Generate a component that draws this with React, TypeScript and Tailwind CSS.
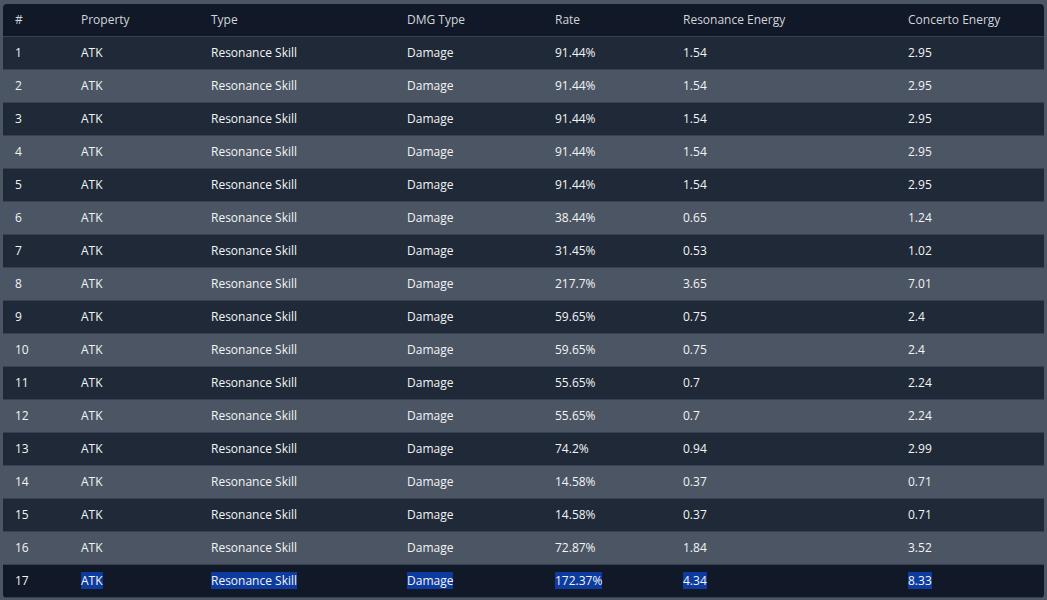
import * as React from "react";

type Row = {
  rate: string;
  res: string;
  con: string;
};

const rows: Row[] = [
  { rate: "91.44%", res: "1.54", con: "2.95" },
  { rate: "91.44%", res: "1.54", con: "2.95" },
  { rate: "91.44%", res: "1.54", con: "2.95" },
  { rate: "91.44%", res: "1.54", con: "2.95" },
  { rate: "91.44%", res: "1.54", con: "2.95" },
  { rate: "38.44%", res: "0.65", con: "1.24" },
  { rate: "31.45%", res: "0.53", con: "1.02" },
  { rate: "217.7%", res: "3.65", con: "7.01" },
  { rate: "59.65%", res: "0.75", con: "2.4" },
  { rate: "59.65%", res: "0.75", con: "2.4" },
  { rate: "55.65%", res: "0.7", con: "2.24" },
  { rate: "55.65%", res: "0.7", con: "2.24" },
  { rate: "74.2%", res: "0.94", con: "2.99" },
  { rate: "14.58%", res: "0.37", con: "0.71" },
  { rate: "14.58%", res: "0.37", con: "0.71" },
  { rate: "72.87%", res: "1.84", con: "3.52" },
  { rate: "172.37%", res: "4.34", con: "8.33" },
];

const cols = "grid grid-cols-[66px_130px_196px_148px_128px_225px_1fr]";

function Sel({ on, children }: { on: boolean; children: React.ReactNode }) {
  if (!on) return <span>{children}</span>;
  return <span className="bg-[#0d3b9e]">{children}</span>;
}

export default function App() {
  return (
    <div
      className="h-[600px] w-[1047px] overflow-hidden bg-[#4b5563] pt-[4px] px-[3px] text-[12px]"
      style={{ fontFamily: '"Open Sans", "Noto Sans", sans-serif' }}
    >
      <div className="overflow-hidden rounded-[4px]">
        <div className={`${cols} h-[33px] items-center border-b border-[#374151] bg-[#111827] text-[#d1d5db]`}>
          <div className="pl-[12px]">#</div>
          <div className="pl-[12px]">Property</div>
          <div className="pl-[12px]">Type</div>
          <div className="pl-[12px]">DMG Type</div>
          <div className="pl-[12px]">Rate</div>
          <div className="pl-[12px]">Resonance Energy</div>
          <div className="pl-[12px]">Concerto Energy</div>
        </div>
        {rows.map((r, i) => {
          const last = i === rows.length - 1;
          const bg = last ? "bg-[#111827]" : i % 2 === 0 ? "bg-[#1f2937]" : "bg-[#4b5563]";
          return (
            <div
              key={i}
              className={`${cols} ${bg} h-[33px] items-center border-b border-[#374151] text-[#f3f4f6]`}
            >
              <div className="pl-[12px]">{i + 1}</div>
              <div className="pl-[12px]"><Sel on={last}>ATK</Sel></div>
              <div className="pl-[12px]"><Sel on={last}>Resonance Skill</Sel></div>
              <div className="pl-[12px]"><Sel on={last}>Damage</Sel></div>
              <div className="pl-[12px]"><Sel on={last}>{r.rate}</Sel></div>
              <div className="pl-[12px]"><Sel on={last}>{r.res}</Sel></div>
              <div className="pl-[12px]"><Sel on={last}>{r.con}</Sel></div>
            </div>
          );
        })}
      </div>
    </div>
  );
}
